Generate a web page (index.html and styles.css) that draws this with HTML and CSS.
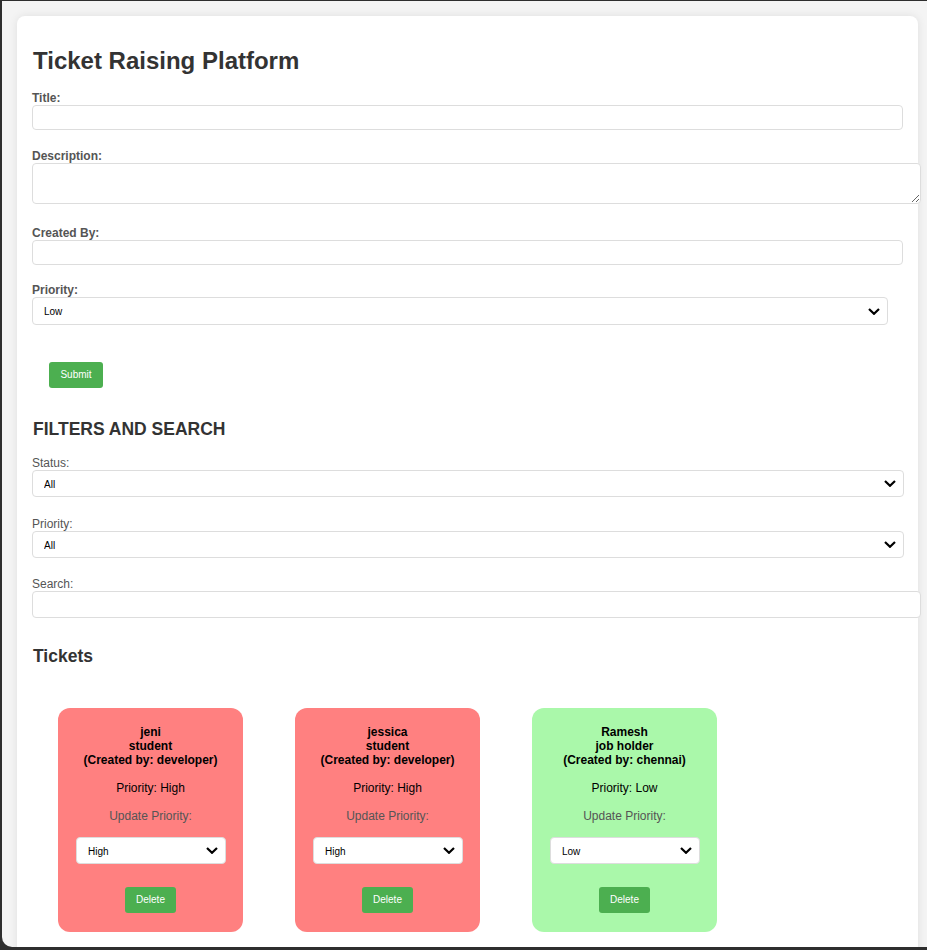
FILE: index.html
```html
<!DOCTYPE html>
<html lang="en">
<head>
<meta charset="utf-8">
<title>Ticket Raising Platform</title>
<link rel="stylesheet" href="styles.css">
</head>
<body>
<div class="window">
  <div class="container">
    <h1 class="title">Ticket Raising Platform</h1>
    <form class="ticket-form">
      <div class="group">
        <label class="form-label" for="t-title">Title:</label>
        <input class="field field-block" id="t-title" type="text">
      </div>
      <div class="group group-textarea">
        <label class="form-label" for="t-desc">Description:</label>
        <textarea class="field field-wide field-area" id="t-desc"></textarea>
      </div>
      <div class="group group-by">
        <label class="form-label" for="t-by">Created By:</label>
        <input class="field field-block" id="t-by" type="text">
      </div>
      <div class="group group-last">
        <label class="form-label" for="t-pri">Priority:</label>
        <div class="select-wrap wrap-form">
          <select class="field select" id="t-pri">
            <option>Low</option>
            <option>Medium</option>
            <option>High</option>
          </select>
          <svg class="chev" width="12" height="7" viewBox="0 0 12 7" aria-hidden="true"><path d="M1 1 L6 5.8 L11 1" fill="none" stroke="#000" stroke-width="2.2"/></svg>
        </div>
      </div>
      <button class="btn btn-submit" type="button">Submit</button>
    </form>

    <h2 class="section-title upper">FILTERS AND SEARCH</h2>
    <div class="filters">
      <div class="fgroup fgroup-1">
        <label class="filter-label" for="f-status">Status:</label>
        <div class="select-wrap wrap-filter">
          <select class="field select" id="f-status">
            <option>All</option>
          </select>
          <svg class="chev" width="12" height="7" viewBox="0 0 12 7" aria-hidden="true"><path d="M1 1 L6 5.8 L11 1" fill="none" stroke="#000" stroke-width="2.2"/></svg>
        </div>
      </div>
      <div class="fgroup fgroup-2">
        <label class="filter-label" for="f-pri">Priority:</label>
        <div class="select-wrap wrap-filter">
          <select class="field select" id="f-pri">
            <option>All</option>
          </select>
          <svg class="chev" width="12" height="7" viewBox="0 0 12 7" aria-hidden="true"><path d="M1 1 L6 5.8 L11 1" fill="none" stroke="#000" stroke-width="2.2"/></svg>
        </div>
      </div>
      <div class="fgroup fgroup-3">
        <label class="filter-label" for="f-search">Search:</label>
        <input class="field field-wide field-search" id="f-search" type="text">
      </div>
    </div>

    <h2 class="section-title tickets-title">Tickets</h2>
    <div class="tickets">
      <div class="card card-high">
        <div class="card-head">jeni<br>student<br>(Created by: developer)</div>
        <p class="card-pri">Priority: High</p>
        <p class="card-upd">Update Priority:</p>
        <div class="select-wrap wrap-card">
          <select class="field select">
            <option>Low</option><option>Medium</option><option selected>High</option>
          </select>
          <svg class="chev" width="12" height="7" viewBox="0 0 12 7" aria-hidden="true"><path d="M1 1 L6 5.8 L11 1" fill="none" stroke="#000" stroke-width="2.2"/></svg>
        </div>
        <button class="btn btn-delete" type="button">Delete</button>
      </div>
      <div class="card card-high">
        <div class="card-head">jessica<br>student<br>(Created by: developer)</div>
        <p class="card-pri">Priority: High</p>
        <p class="card-upd">Update Priority:</p>
        <div class="select-wrap wrap-card">
          <select class="field select">
            <option>Low</option><option>Medium</option><option selected>High</option>
          </select>
          <svg class="chev" width="12" height="7" viewBox="0 0 12 7" aria-hidden="true"><path d="M1 1 L6 5.8 L11 1" fill="none" stroke="#000" stroke-width="2.2"/></svg>
        </div>
        <button class="btn btn-delete" type="button">Delete</button>
      </div>
      <div class="card card-low">
        <div class="card-head">Ramesh<br>job holder<br>(Created by: chennai)</div>
        <p class="card-pri">Priority: Low</p>
        <p class="card-upd">Update Priority:</p>
        <div class="select-wrap wrap-card">
          <select class="field select">
            <option selected>Low</option><option>Medium</option><option>High</option>
          </select>
          <svg class="chev" width="12" height="7" viewBox="0 0 12 7" aria-hidden="true"><path d="M1 1 L6 5.8 L11 1" fill="none" stroke="#000" stroke-width="2.2"/></svg>
        </div>
        <button class="btn btn-delete" type="button">Delete</button>
      </div>
    </div>
  </div>
</div>
</body>
</html>
```

FILE: styles.css
```css
html, body {
  margin: 0;
  padding: 0;
}

body {
  background: #2e2e2e;
  font-family: "Liberation Sans", Arial, sans-serif;
  overflow: hidden;
}

.window {
  margin: 1px 0 0 2px;
  height: 946px;
  box-sizing: border-box;
  background: #f4f4f4;
  border-bottom-left-radius: 10px;
  overflow: hidden;
  padding: 15px 9px 0 15px;
}

.container {
  background: #ffffff;
  border-radius: 8px;
  box-shadow: 0 0 10px rgba(0, 0, 0, 0.09);
  padding: 15px 15px 40px;
}

.title {
  font-size: 24px;
  font-weight: bold;
  color: #333333;
  margin: 16px 0 16px 1px;
  line-height: 27.6px;
}

.group {
  margin-bottom: 19px;
}

.group-textarea {
  margin-bottom: 22px;
}

.group-by {
  margin-bottom: 18px;
}

.group-last {
  margin-bottom: 37px;
}

.form-label {
  display: block;
  font-size: 12px;
  font-weight: bold;
  color: #555555;
  line-height: 14px;
}

.field {
  display: block;
  font-family: "Liberation Sans", Arial, sans-serif;
  font-size: 10px;
  color: #000000;
  background: #ffffff;
  border: 1px solid #dddddd;
  border-radius: 4px;
  margin: 0;
}

.field-block {
  width: 100%;
  box-sizing: border-box;
  height: 25px;
  padding: 0 8px;
}

.field-wide {
  width: 100%;
  box-sizing: content-box;
  padding: 0 8px;
}

.field-area {
  height: 39px;
  padding: 0 8px;
  resize: both;
}

.field-search {
  height: 25px;
}

.select-wrap {
  position: relative;
}

.select {
  -webkit-appearance: none;
  appearance: none;
  width: 100%;
  height: 100%;
  box-sizing: border-box;
  padding: 2px 26px 0 11px;
  cursor: pointer;
}

.chev {
  position: absolute;
  right: 8px;
  top: 50%;
  margin-top: -3px;
  pointer-events: none;
}

.wrap-form {
  width: calc(100% - 15px);
  height: 28px;
}

.wrap-filter {
  width: calc(100% + 1px);
  height: 27px;
}

.wrap-card {
  width: 150px;
  height: 27px;
  margin: 13.4px 0 0 18px;
}

.btn {
  display: block;
  background: #4caf50;
  color: #ffffff;
  border: none;
  border-radius: 3px;
  font-family: "Liberation Sans", Arial, sans-serif;
  font-size: 10px;
  cursor: pointer;
}

.btn-submit {
  margin-left: 17px;
  width: 54px;
  height: 26px;
  padding: 0;
}

.section-title {
  font-size: 17.5px;
  font-weight: bold;
  color: #333333;
  line-height: 20px;
  margin: 0 0 0 1px;
}

.upper {
  margin-top: 31px;
  margin-bottom: 17px;
}

.fgroup-1 {
  margin-bottom: 20px;
}

.fgroup-2 {
  margin-bottom: 19px;
}

.fgroup-3 {
  margin-bottom: 28px;
}

.filter-label {
  display: block;
  font-size: 12px;
  color: #555555;
  line-height: 14px;
}

.tickets-title {
  margin-bottom: 42px;
}

.tickets {
  display: flex;
  gap: 52px;
  padding-left: 26px;
}

.card {
  width: 185px;
  box-sizing: border-box;
  border-radius: 12px;
  padding: 17px 0 19px;
  text-align: center;
  color: #000000;
  font-size: 12px;
}

.card-high {
  background: #ff8080;
}

.card-low {
  background: #aaf8aa;
}

.card-head {
  font-weight: bold;
  line-height: 14px;
}

.card-pri {
  margin: 14.4px 0 0;
  line-height: 14px;
}

.card-upd {
  margin: 14.4px 0 0;
  line-height: 14px;
  color: #555555;
}

.btn-delete {
  margin: 23px auto 0;
  width: 51px;
  height: 26px;
  padding: 0;
}
```
